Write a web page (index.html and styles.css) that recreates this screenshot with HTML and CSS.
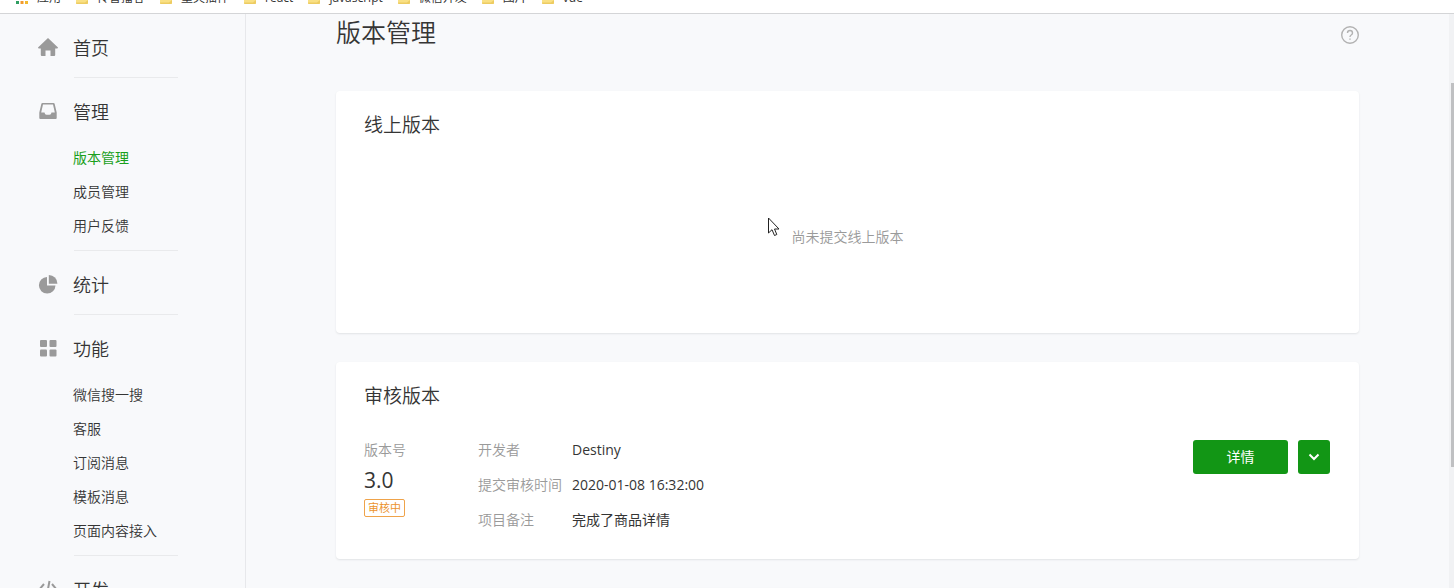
FILE: index.html
```html
<!DOCTYPE html>
<html lang="zh-CN">
<head>
<meta charset="utf-8">
<title>版本管理</title>
<link rel="stylesheet" href="styles.css">
</head>
<body>
<svg class="defs" aria-hidden="true"><symbol id="folder" viewBox="0 0 14 14"><path d="M1 2h5l1 2h6v8a1 1 0 0 1-1 1H2a1 1 0 0 1-1-1z" fill="#f9e084"/><path d="M1 11.500h9l3-2.500v3a1 1 0 0 1-1 1H2a1 1 0 0 1-1-1z" fill="#edcc62"/></symbol></svg>
<nav class="bookmarks" aria-label="书签">
  <a class="bookmark" href="#"><svg viewBox="0 0 14 14"><path fill="#e04b3a" d="M1 2h3v3H1zM5 2h3v3H5z"/><path fill="#2f9e62" d="M1 10h3v3H1z"/><path fill="#f29a2e" d="M5.500 10h3v3h-3z"/><path fill="#f2b92e" d="M10 10h3v3h-3z"/></svg>应用</a>
  <a class="bookmark" href="#"><svg><use href="#folder"/></svg>传智播客</a>
  <a class="bookmark" href="#"><svg><use href="#folder"/></svg>童夫插件</a>
  <a class="bookmark" href="#"><svg><use href="#folder"/></svg>react</a>
  <a class="bookmark" href="#"><svg><use href="#folder"/></svg>javascript</a>
  <a class="bookmark" href="#"><svg><use href="#folder"/></svg>微信开发</a>
  <a class="bookmark" href="#"><svg><use href="#folder"/></svg>图片</a>
  <a class="bookmark" href="#"><svg><use href="#folder"/></svg>vue</a>
</nav>
<div class="layout">
  <nav class="sidebar" aria-label="主菜单">
    <section class="group">
      <a class="group-title" href="#"><svg class="icon" viewBox="0 0 20 20"><path d="M10 0 20 9.500Q20 10.500 19 10.500H17.200V17Q17.200 18 16.200 18H12.500V12.500H7.500V18H3.800Q2.800 18 2.800 17V10.500H1Q0 10.500 0 9.500Z"/></svg>首页</a>
    </section>
    <section class="group">
      <a class="group-title" href="#"><svg class="icon" viewBox="0 0 20 20"><path fill-rule="evenodd" d="M4.500 1h11q1 0 1.200 1L18.700 10.500V16q0 1-1 1H2.300q-1 0-1-1V10.500L3.300 2Q3.500 1 4.500 1ZM5 2.600 3.200 10.500H6.500q.3 2.300 2 2.300h3q1.700 0 2-2.300h3.300L15 2.600Z"/></svg>管理</a>
      <ul class="links">
        <li><a class="active" href="#">版本管理</a></li>
        <li><a href="#">成员管理</a></li>
        <li><a href="#">用户反馈</a></li>
      </ul>
    </section>
    <section class="group">
      <a class="group-title" href="#"><svg class="icon" viewBox="0 0 20 20"><path d="M9 2v8.500h8.500A8.300 8.300 0 1 1 9 2Z"/><path d="M10.800 0A8.600 8.600 0 0 1 19.400 8.800h-8.600Z"/></svg>统计</a>
    </section>
    <section class="group">
      <a class="group-title" href="#"><svg class="icon" viewBox="0 0 20 20"><rect x="2" y="1" width="7" height="7" rx="1"/><rect x="11.500" y="1" width="7" height="7" rx="1"/><rect x="2" y="10.500" width="7" height="7" rx="1"/><rect x="11.500" y="10.500" width="7" height="7" rx="1"/></svg>功能</a>
      <ul class="links">
        <li><a href="#">微信搜一搜</a></li>
        <li><a href="#">客服</a></li>
        <li><a href="#">订阅消息</a></li>
        <li><a href="#">模板消息</a></li>
        <li><a href="#">页面内容接入</a></li>
      </ul>
    </section>
    <section class="group">
      <a class="group-title" href="#"><svg class="icon code" viewBox="0 0 20 20"><path d="M6 4 1 10l5 6M14 4l5 6-5 6M11.500 1l-3 16"/></svg>开发</a>
    </section>
  </nav>
  <main class="content">
    <header class="page-head">
      <h1>版本管理</h1>
      <button class="help" type="button" aria-label="帮助"><svg viewBox="0 0 20 20"><circle cx="11" cy="11" r="8.300"/><path d="M8.500 9q0-2.500 2.500-2.500T13.500 9q0 1.200-1.300 2T11 13M11 14.400v1.400"/></svg></button>
    </header>
    <section class="card">
      <h2>线上版本</h2>
      <p class="empty">尚未提交线上版本</p>
    </section>
    <section class="card">
      <h2>审核版本</h2>
      <div class="review">
        <div class="version">
          <span class="label">版本号</span>
          <strong>3.0</strong>
          <span class="badge">审核中</span>
        </div>
        <dl class="details">
          <dt>开发者</dt><dd>Destiny</dd>
          <dt>提交审核时间</dt><dd>2020-01-08 16:32:00</dd>
          <dt>项目备注</dt><dd>完成了商品详情</dd>
        </dl>
        <div class="actions">
          <button class="btn" type="button">详情</button>
          <button class="btn btn-more" type="button" aria-label="更多操作"><svg viewBox="0 0 12 12"><path d="m1.500 3.500 4.500 4.500 4.500-4.500"/></svg></button>
        </div>
      </div>
    </section>
    <section class="card"></section>
  </main>
  <div class="scrollbar"><div class="thumb"></div></div>
</div>
<svg class="pointer" viewBox="0 0 12 20" aria-hidden="true"><path d="M.5 1v15l3.500-3.300L6.500 18.500l2.300-1L6.500 12H11Z"/></svg>
</body>
</html>
```
FILE: styles.css
```css
* { box-sizing: border-box; margin: 0; padding: 0; }
body {
  display: flex;
  flex-direction: column;
  height: 100vh;
  overflow: hidden;
  background: #f8f9fb;
  color: #353535;
  font: 350 14px/22px "Open Sans", "Noto Sans CJK SC", sans-serif;
}
a { color: inherit; text-decoration: none; }
ul { list-style: none; }
button { font: inherit; border: 0; cursor: pointer; }
.defs { display: none; }

.bookmarks {
  display: flex;
  flex: none;
  align-items: flex-end;
  gap: 14px;
  height: 14px;
  padding: 0 15px 6px;
  overflow: hidden;
  background: #fff;
  border-bottom: 1px solid #d4d5d7;
  font-size: 12px;
  font-weight: 400;
  line-height: 18px;
}
.bookmark { display: flex; align-items: center; gap: 8px; white-space: nowrap; }
.bookmark svg { width: 14px; height: 14px; }

.layout { display: flex; flex: 1; min-height: 0; overflow: hidden; }
.sidebar {
  flex: none;
  width: 246px;
  padding-left: 38px;
  border-right: 1px solid #e7e8eb;
}
.group { position: relative; padding: 22px 0 18px; }
.group::after {
  content: "";
  position: absolute;
  left: 36px;
  bottom: 0;
  width: 104px;
  height: 1px;
  background: #e9eaec;
}
.group-title {
  display: flex;
  align-items: center;
  gap: 15px;
  font-size: 18px;
  line-height: 24px;
}
.icon { width: 20px; height: 20px; fill: #9a9a9a; }
.code { fill: none; stroke: #9a9a9a; stroke-width: 2; }
.links { padding: 17px 0 0 35px; margin-bottom: -10px; }
.links a { display: block; line-height: 34px; }
.links .active { color: #1aa01c; font-weight: 400; }

.content { flex: 1; min-width: 0; padding: 0 90px; }
.page-head {
  display: flex;
  align-items: center;
  justify-content: space-between;
  margin-bottom: 41px;
}
h1 { font-size: 25px; font-weight: 350; line-height: 36px; }
.help { width: 20px; height: 20px; margin-top: 4px; background: none; }
.help svg { display: block; overflow: visible; fill: none; stroke: #b2b2b2; stroke-width: 1.4; }
.card {
  margin-bottom: 29px;
  padding: 20px 28px 28px;
  background: #fff;
  border-radius: 4px;
  box-shadow: 0 1px 2px #e1e3e6;
}
h2 { font-size: 19px; font-weight: 350; line-height: 28px; }
.empty { padding: 87px 0 57px; color: #9a9a9a; text-align: center; }
.review { display: flex; align-items: flex-start; padding-top: 29px; }
.version { display: flex; flex-direction: column; align-items: flex-start; width: 114px; }
.label, dt { color: #9a9a9a; }
dd { font-weight: 400; }
.version strong { margin-top: 4px; font-size: 21px; font-weight: 400; line-height: 30px; }
.badge {
  margin-top: 4px;
  padding: 0 3px;
  border: 1px solid #efa34a;
  border-radius: 2px;
  color: #ec932e;
  font-size: 11px;
  font-weight: 400;
  line-height: 16px;
}
.details { display: grid; grid-template-columns: 94px auto; row-gap: 13px; }
.actions { display: flex; gap: 10px; margin: 1px 1px 0 auto; }
.btn {
  width: 95px;
  height: 34px;
  border-radius: 3px;
  background: #129615;
  color: #fff;
  font-weight: 400;
}
.btn-more { display: flex; align-items: center; justify-content: center; width: 32px; }
.btn-more svg { width: 12px; height: 12px; fill: none; stroke: #fff; stroke-width: 2; }

.scrollbar { flex: none; width: 5px; padding: 69px 0 0 2px; background: #f1f2f4; }
.thumb { height: 76%; background: #bfc0c2; }
.pointer {
  position: absolute;
  left: 768px;
  top: 217px;
  width: 12px;
  height: 20px;
  fill: #fff;
  stroke: #222;
}
```
